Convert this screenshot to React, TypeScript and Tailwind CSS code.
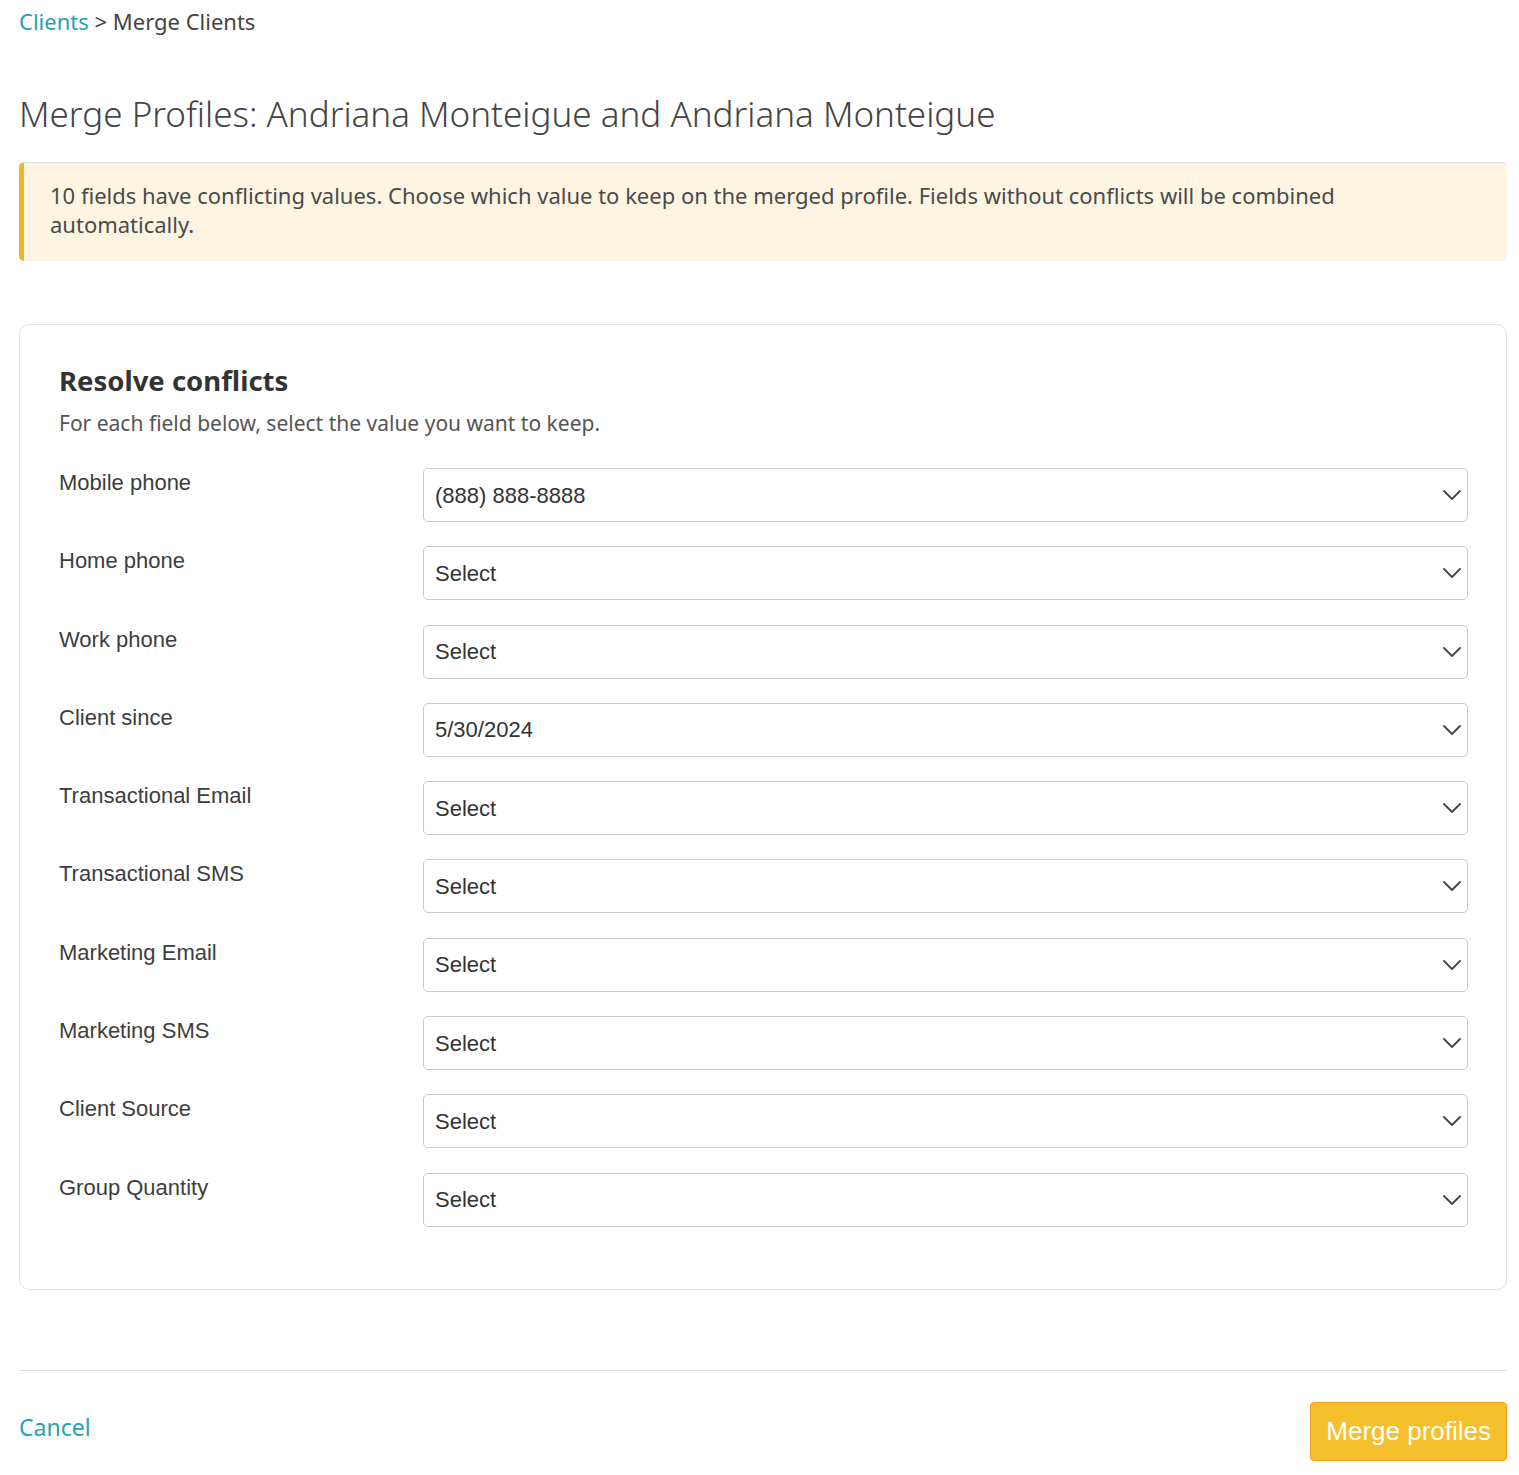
const rows = [
  { label: "Mobile phone", value: "(888) 888-8888" },
  { label: "Home phone", value: "Select" },
  { label: "Work phone", value: "Select" },
  { label: "Client since", value: "5/30/2024" },
  { label: "Transactional Email", value: "Select" },
  { label: "Transactional SMS", value: "Select" },
  { label: "Marketing Email", value: "Select" },
  { label: "Marketing SMS", value: "Select" },
  { label: "Client Source", value: "Select" },
  { label: "Group Quantity", value: "Select" },
];

const brand = "font-['Noto_Sans','Open_Sans',sans-serif]";
const arial = "font-['Liberation_Sans',Arial,sans-serif]";

function Caret() {
  return (
    <svg width="18" height="10" viewBox="0 0 18 10" fill="none" className="text-[#444]">
      <path d="M1 1l8 8 8-8" stroke="currentColor" strokeWidth="1.8" strokeLinecap="round" strokeLinejoin="round" />
    </svg>
  );
}

function ConflictRow({ label, value }: { label: string; value: string }) {
  return (
    <div className="flex items-start">
      <div className={`w-[364px] shrink-0 pt-[1px] text-[22px] leading-[28px] text-[#3d3d3d] ${arial}`}>{label}</div>
      <div className="flex h-[54px] flex-1 items-center justify-between rounded-[5px] border border-[#c9c9c9] bg-white pl-[11px] pr-[6px]">
        <span className={`text-[22px] text-[#333] ${arial}`}>{value}</span>
        <Caret />
      </div>
    </div>
  );
}

export default function App() {
  return (
    <div className={`min-h-[1475px] bg-white pl-[19px] pr-[12px] ${brand}`}>
      <div className="pt-[7px] text-[22px] leading-[28px] text-[#444]">
        <span className="text-[#2a9fb8]">Clients</span> &gt; Merge Clients
      </div>

      <h1 className="mt-[57px] text-[35px] font-light leading-[44px] text-[#444]">
        Merge Profiles: Andriana Monteigue and Andriana Monteigue
      </h1>

      <div className="mt-[26px] rounded-[5px] border-t border-[#e3e3e3] border-l-[5px] border-l-[#f0b429] bg-[#fdf5e2] pb-[22px] pl-[26px] pr-[80px] pt-[18px] text-[22px] leading-[29px] text-[#4a4a4a]">
        10 fields have conflicting values. Choose which value to keep on the merged profile. Fields without conflicts will be
        combined automatically.
      </div>

      <div className="mt-[63px] rounded-[10px] border border-[#e3e3e3] pb-[62px] pl-[39px] pr-[38px] pt-[38px]">
        <h2 className="text-[27.5px] font-bold leading-[36px] text-[#333]">Resolve conflicts</h2>
        <p className="mt-[11px] text-[21px] leading-[26px] text-[#555]">For each field below, select the value you want to keep.</p>
        <div className="mt-[32px] flex flex-col gap-[24.3px]">
          {rows.map((r) => (
            <ConflictRow key={r.label} label={r.label} value={r.value} />
          ))}
        </div>
      </div>

      <div className="mt-[80px] border-t border-[#e3e3e3]" />

      <div className="mt-[31px] flex items-start justify-between">
        <button className="mt-[8px] text-[23px] text-[#2a9fb8]">Cancel</button>
        <button className={`h-[59px] rounded-[4px] border border-[#ef9f1c] bg-[#f6bf2c] px-[15px] text-[26px] text-white ${arial}`}>
          Merge profiles
        </button>
      </div>
    </div>
  );
}
